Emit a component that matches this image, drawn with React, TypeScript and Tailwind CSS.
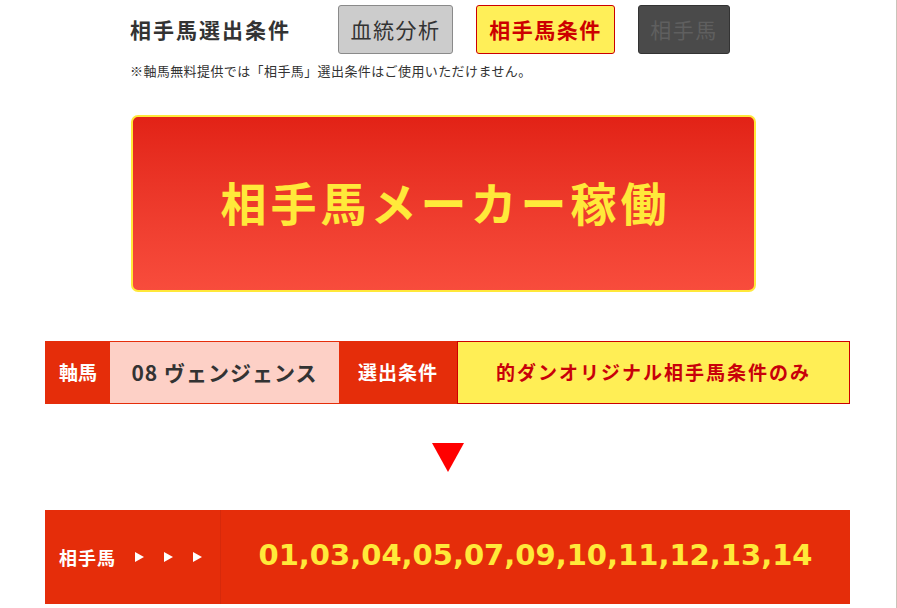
import React from 'react';

const numbers = ['01', '03', '04', '05', '07', '09', '10', '11', '12', '13', '14'];

const Tab = ({ label, className }: { label: string; className: string }) => (
  <div className={`h-[49px] flex items-center justify-center rounded-[3px] border text-[21px] tracking-[1.5px] ${className}`}>
    {label}
  </div>
);

const Arrow = () => (
  <span className="block w-0 h-0 border-l-[9px] border-l-white border-y-[5px] border-y-transparent" />
);

export default function App() {
  return (
    <div className="w-full h-[608px] bg-white border-r border-[#cbc3ba] overflow-hidden font-['Noto_Sans_CJK_JP',sans-serif]">
      <div className="ml-[45px] w-[805px]">
        {/* selector row */}
        <div className="pl-[85px] pt-[5px] flex items-center">
          <h2 className="w-[208px] text-[21px] font-bold tracking-[2px] text-[#333] leading-none">相手馬選出条件</h2>
          <div className="flex gap-[23px]">
            <Tab label="血統分析" className="w-[115px] bg-[#cccccc] border-[#8a8a8a] text-[#333]" />
            <Tab label="相手馬条件" className="w-[139px] bg-[#ffef58] border-[#cc0000] text-[#cc0000] font-bold" />
            <Tab label="相手馬" className="w-[92px] bg-[#4a4a4a] border-[#333] text-[#5f5f5f]" />
          </div>
        </div>
        <p className="pl-[85px] mt-[9px] text-[13px] leading-[16px] tracking-[0.4px] text-[#333]">
          ※軸馬無料提供では「相手馬」選出条件はご使用いただけません。
        </p>

        {/* big start button */}
        <div className="ml-[86px] mt-[36px] w-[625px] h-[177px] rounded-[7px] border-2 border-[#ffe83a] bg-gradient-to-b from-[#e22216] to-[#f84c3c] flex items-center justify-center">
          <span className="pl-[4px] pb-[6px] text-[46px] font-bold tracking-[4px] text-[#ffe93a] leading-none">相手馬メーカー稼働</span>
        </div>

        {/* condition row */}
        <div className="mt-[49px] h-[63px] flex border-l border-[#e52d0a] text-[19px] font-bold">
          <div className="w-[64px] bg-[#e52d0a] text-white flex items-center justify-center">軸馬</div>
          <div className="w-[229px] bg-[#fdd0c6] border-y border-[#e52d0a] text-[#333] text-[21px] tracking-[1px] flex items-center justify-center">
            08 ヴェンジェンス
          </div>
          <div className="w-[118px] bg-[#e52d0a] text-white flex items-center justify-center tracking-[1px]">選出条件</div>
          <div className="flex-1 bg-[#ffee55] border border-[#cc0000] text-[#c8000a] flex items-center justify-center tracking-[2px]">
            的ダンオリジナル相手馬条件のみ
          </div>
        </div>

        {/* arrow */}
        <div className="mt-[39px] mx-auto w-0 h-0 border-x-[16.5px] border-x-transparent border-t-[29px] border-t-[#ff0000]" />

        {/* result */}
        <div className="mt-[38px] h-[94px] flex bg-[#e52d0a]">
          <div className="w-[176px] border-r border-[#d6290b] flex items-center pl-[14px] gap-[20px]">
            <span className="text-[18px] font-bold text-white tracking-[1px] mr-[-1px]">相手馬</span>
            <Arrow />
            <Arrow />
            <Arrow />
          </div>
          <div className="flex-1 flex items-center justify-center pb-[3px] text-[29px] font-bold text-[#ffe93a] font-['DejaVu_Sans',sans-serif]">
            {numbers.join(',')}
          </div>
        </div>
      </div>
    </div>
  );
}
